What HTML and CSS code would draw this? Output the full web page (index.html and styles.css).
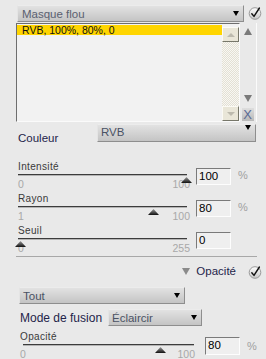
FILE: index.html
```html
<!DOCTYPE html>
<html lang="fr">
<head>
  <meta charset="UTF-8" />
  <meta name="viewport" content="width=device-width, initial-scale=1.0" />
  <title>Masque flou</title>
  <link rel="stylesheet" href="styles.css">
</head>
<body>
  <div class="panel">
    <div class="top-row">
      <div class="select select-title"><span>Masque flou</span><i class="caret"></i></div>
      <svg class="check" width="14" height="14" viewBox="0 0 14 14">
        <defs>
          <linearGradient id="cg" x1="0" y1="0" x2="0" y2="1">
            <stop offset="0" stop-color="#ffffff"/>
            <stop offset="1" stop-color="#c8c8c8"/>
          </linearGradient>
        </defs>
        <circle cx="7" cy="7.5" r="5.8" fill="url(#cg)" stroke="#9a9a9a" stroke-width="1"/>
        <path d="M3.8 7.8 L6 10.4 L11.4 2" fill="none" stroke="#111" stroke-width="1.4" stroke-linecap="round" stroke-linejoin="round"/>
      </svg>
    </div>

    <div class="list-row">
      <div class="list">
        <div class="list-items">
          <div class="item selected">RVB, 100%, 80%, 0</div>
        </div>
        <div class="scrollbar">
          <div class="sb-btn"><i class="sb-tri up"></i></div>
          <div class="sb-track"></div>
          <div class="sb-btn"><i class="sb-tri down"></i></div>
        </div>
      </div>
      <div class="list-tools">
        <i class="move up"></i>
        <i class="move down"></i>
        <span class="remove">X</span>
      </div>
    </div>

    <div class="color-row">
      <span class="field-label couleur">Couleur</span>
      <div class="select select-rvb"><span>RVB</span><i class="caret"></i></div>
    </div>

    <div class="slider first">
      <div class="track-col">
        <div class="slider-label">Intensité</div>
        <div class="track"></div>
        <i class="thumb" style="left: 163px"></i>
        <div class="scale"><span>0</span><span>100</span></div>
      </div>
      <div class="num-input">100</div>
      <span class="unit">%</span>
    </div>

    <div class="slider">
      <div class="track-col">
        <div class="slider-label">Rayon</div>
        <div class="track"></div>
        <i class="thumb" style="left: 130px"></i>
        <div class="scale"><span>1</span><span>100</span></div>
      </div>
      <div class="num-input">80</div>
      <span class="unit">%</span>
    </div>

    <div class="slider last">
      <div class="track-col">
        <div class="slider-label">Seuil</div>
        <div class="track"></div>
        <i class="thumb" style="left: -3px"></i>
        <div class="scale"><span>0</span><span>255</span></div>
      </div>
      <div class="num-input">0</div>
    </div>

    <div class="separator"></div>

    <div class="section-head">
      <i class="fold"></i>
      <span class="section-title">Opacité</span>
      <svg class="check" width="14" height="14" viewBox="0 0 14 14">
        <defs>
          <linearGradient id="cg2" x1="0" y1="0" x2="0" y2="1">
            <stop offset="0" stop-color="#ffffff"/>
            <stop offset="1" stop-color="#c8c8c8"/>
          </linearGradient>
        </defs>
        <circle cx="7" cy="7.5" r="5.8" fill="url(#cg2)" stroke="#9a9a9a" stroke-width="1"/>
        <path d="M3.8 7.8 L6 10.4 L11.4 2" fill="none" stroke="#111" stroke-width="1.4" stroke-linecap="round" stroke-linejoin="round"/>
      </svg>
    </div>

    <div class="select select-tout"><span>Tout</span><i class="caret"></i></div>

    <div class="mode-row">
      <span class="field-label mode">Mode de fusion</span>
      <div class="select select-mode"><span>Éclaircir</span><i class="caret"></i></div>
    </div>

    <div class="slider opacity">
      <div class="track-col">
        <div class="slider-label">Opacité</div>
        <div class="track"></div>
        <i class="thumb" style="left: 135px"></i>
        <div class="scale"><span>0</span><span>100</span></div>
      </div>
      <div class="num-input">80</div>
      <span class="unit">%</span>
    </div>
  </div>
</body>
</html>
```

FILE: styles.css
```css
body {
  margin: 0;
  background: #e9e9e9;
  font-family: 'Liberation Sans', Arial, sans-serif;
  color: #222;
}

.panel {
  padding-top: 5px;
  width: 266px;
  height: 359px;
  overflow: hidden;
}

/* dropdowns */
.select {
  box-sizing: border-box;
  display: flex;
  align-items: center;
  background: linear-gradient(#e2e2e2, #c4c4c4);
  border: 1px solid;
  border-color: #ececec #8e8e8e #8e8e8e #e4e4e4;
  color: #4a5264;
  font-size: 11.5px;
  padding-left: 3px;
}

.caret {
  margin-left: auto;
  margin-right: 4px;
  width: 0;
  height: 0;
  border-left: 3.5px solid transparent;
  border-right: 3.5px solid transparent;
  border-top: 5px solid #000;
}

.top-row {
  display: flex;
  margin-left: 17px;
  height: 17px;
}

.select-title {
  width: 227px;
  height: 17px;
  font-size: 11.5px;
  color: #5a6070;
  padding-left: 4px;
}

.check {
  margin-left: 4px;
  margin-top: 1px;
}

/* list */
.list-row {
  display: flex;
  margin-top: 1px;
  margin-left: 16px;
  width: 240px;
  height: 99px;
  border-right: 1px solid #fbfbfb;
}

.list {
  box-sizing: border-box;
  display: flex;
  width: 224px;
  height: 99px;
  background: #f2f2f2;
  border: 1px solid;
  border-color: #6e6e6e #fafafa #fafafa #6e6e6e;
}

.list-items {
  flex: 1;
  padding-top: 1px;
}

.item {
  height: 10px;
  line-height: 10px;
  font-size: 10.5px;
  padding-left: 5px;
  color: #111;
}

.item.selected {
  background: #ffd500;
}

.scrollbar {
  display: flex;
  flex-direction: column;
  width: 17px;
  padding-top: 3px;
}

.sb-btn {
  box-sizing: border-box;
  height: 15px;
  display: flex;
  align-items: center;
  justify-content: center;
  background: #e9e6d8;
  border: 1px solid;
  border-color: #fbfaf4 #77776a #77776a #fbfaf4;
}

.sb-track {
  flex: 1;
  background-color: #f3f2ed;
  background-image: repeating-conic-gradient(#e3e0d4 0 25%, #f8f7f3 0 50%);
  background-size: 2px 2px;
}

.sb-tri {
  width: 0;
  height: 0;
  border-left: 4px solid transparent;
  border-right: 4px solid transparent;
}

.sb-tri.up { border-bottom: 4px solid #bdbaae; }
.sb-tri.down { border-top: 4px solid #bdbaae; }

.list-tools {
  display: flex;
  flex-direction: column;
  align-items: center;
  width: 15px;
  padding-top: 5px;
  box-sizing: border-box;
}

.move {
  width: 0;
  height: 0;
  border-left: 4.5px solid transparent;
  border-right: 4.5px solid transparent;
}

.move.up { border-bottom: 7px solid #7a7a7a; }
.move.down { border-top: 7px solid #7a7a7a; margin-top: auto; margin-bottom: 6px; }

.remove {
  width: 12px;
  height: 13px;
  margin-bottom: 1px;
  background: linear-gradient(#dedede, #b9b9b9);
  color: #5a6a94;
  font-size: 13px;
  line-height: 13px;
  text-align: center;
}

/* couleur */
.color-row {
  display: flex;
  margin-top: 2px;
  padding-left: 18px;
}

.field-label {
  font-size: 11.5px;
  color: #24244a;
}

.couleur {
  width: 79px;
  margin-top: 8px;
  line-height: 13px;
}

.select-rvb {
  width: 159px;
  height: 18px;
  align-items: flex-start;
  line-height: 14px;
}

/* sliders */
.slider {
  display: flex;
  align-items: flex-start;
  height: 32px;
  padding-left: 18px;
}

.slider.first { margin-top: 16px; }
.slider.last { height: 31px; }

.track-col {
  position: relative;
  width: 172px;
}

.slider-label {
  height: 13px;
  line-height: 12px;
  font-size: 10px;
  letter-spacing: 0.35px;
  color: #3a3a3a;
}

.track {
  width: 169px;
  height: 1px;
  background: #3c3c3c;
  border-bottom: 1px solid #b4b4b4;
}

.thumb {
  position: absolute;
  top: 16px;
  width: 11px;
  height: 6px;
  background: linear-gradient(#9a9a9a, #111);
  clip-path: polygon(50% 0, 100% 100%, 0 100%);
}

.scale {
  display: flex;
  justify-content: space-between;
  margin-top: 3px;
  line-height: 10px;
  font-size: 10.5px;
  color: #a8a8a8;
}

.num-input {
  box-sizing: border-box;
  width: 35px;
  height: 17px;
  margin-top: 7px;
  margin-left: 6px;
  padding-left: 2px;
  background: #efefef;
  border: 1px solid;
  border-color: #7a7a7a #fdfdfd #fdfdfd #7a7a7a;
  font-size: 11.5px;
  line-height: 15px;
  color: #000;
}

.unit {
  margin-left: 7px;
  margin-top: 9px;
  font-size: 11px;
  line-height: 10px;
  color: #a0a0a0;
}

.separator {
  margin-left: 16px;
  width: 241px;
  height: 1px;
  background: #a8a8a8;
}

/* opacity section */
.section-head {
  display: flex;
  align-items: center;
  justify-content: flex-end;
  height: 14px;
  margin-top: 7px;
  padding-right: 4px;
}

.fold {
  width: 0;
  height: 0;
  border-left: 4px solid transparent;
  border-right: 4px solid transparent;
  border-top: 7px solid #8a8a8a;
  margin-right: 6px;
}

.section-title {
  font-size: 11.5px;
  color: #24244a;
  margin-right: 8px;
}

.select-tout {
  width: 166px;
  height: 17px;
  margin-top: 9px;
  margin-left: 19px;
}

.mode-row {
  display: flex;
  align-items: center;
  margin-top: 5px;
  padding-left: 20px;
  height: 17px;
}

.mode {
  width: 88px;
  font-size: 12px;
}

.select-mode {
  width: 94px;
  height: 17px;
}

.slider.opacity {
  margin-top: 5px;
  padding-left: 20px;
}

.slider.opacity .track-col { width: 175px; }
.slider.opacity .track { margin-left: 3px; width: 171px; }
.slider.opacity .num-input { margin-left: 10px; margin-top: 6px; height: 18px; }
.slider.opacity .unit { margin-top: 10px; }
```
